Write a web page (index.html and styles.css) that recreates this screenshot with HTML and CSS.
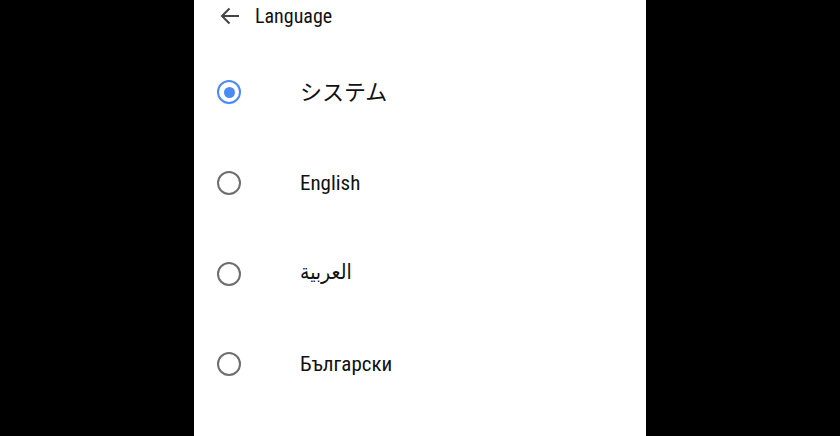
FILE: index.html
```html
<!DOCTYPE html>
<html lang="en">
<head>
<meta charset="utf-8">
<title>Language</title>
<link rel="stylesheet" href="styles.css">
</head>
<body>
<div class="panel">
  <div class="header">
    <svg class="back" width="20" height="18" viewBox="0 0 20 18" aria-hidden="true">
      <path d="M19 9H2M9.5 1.5L2 9l7.5 7.5" fill="none" stroke="#444" stroke-width="2"/>
    </svg>
    <span class="title">Language</span>
  </div>
  <ul class="list">
    <li class="row"><span class="radio checked"></span><span class="label ja">システム</span></li>
    <li class="row"><span class="radio"></span><span class="label">English</span></li>
    <li class="row"><span class="radio"></span><span class="label ar" lang="ar">العربية</span></li>
    <li class="row"><span class="radio"></span><span class="label">Български</span></li>
  </ul>
</div>
</body>
</html>
```
FILE: styles.css
```css
html, body {
  margin: 0;
  height: 100%;
  background: #000;
}
body {
  display: flex;
  justify-content: center;
  overflow: hidden;
}
.panel {
  width: 452px;
  height: 100%;
  background: #fff;
  box-sizing: border-box;
  padding-left: 21px;
  font-family: "Roboto Condensed", Roboto, "Noto Sans CJK JP", sans-serif;
  font-stretch: condensed;
  color: #111;
}
.header {
  height: 32px;
  display: flex;
  align-items: center;
  padding-left: 5px;
}
.back {
  display: block;
}
.title {
  margin-left: 15px;
  font-size: 20px;
  color: #111;
}
.list {
  list-style: none;
  margin: 0;
  padding: 15px 0 0 0;
}
.row {
  height: 90.7px;
  display: flex;
  align-items: center;
}
.radio {
  width: 24px;
  height: 24px;
  box-sizing: border-box;
  border: 2.5px solid #6e6e6e;
  border-radius: 50%;
  margin-left: 2px;
  display: flex;
  align-items: center;
  justify-content: center;
  flex: none;
}
.radio.checked {
  border-color: #4a8af4;
}
.radio.checked::after {
  content: "";
  width: 11px;
  height: 11px;
  border-radius: 50%;
  background: #4a8af4;
}
.label {
  margin-left: 59px;
  font-size: 21px;
  color: #111;
}
.label.ja {
  font-family: "Noto Sans CJK JP", sans-serif;
  font-size: 22px;
  margin-top: -4px;
}
.label.ar {
  font-family: "DejaVu Sans", "Noto Sans", sans-serif;
  font-size: 21px;
  margin-top: -4px;
}
```
